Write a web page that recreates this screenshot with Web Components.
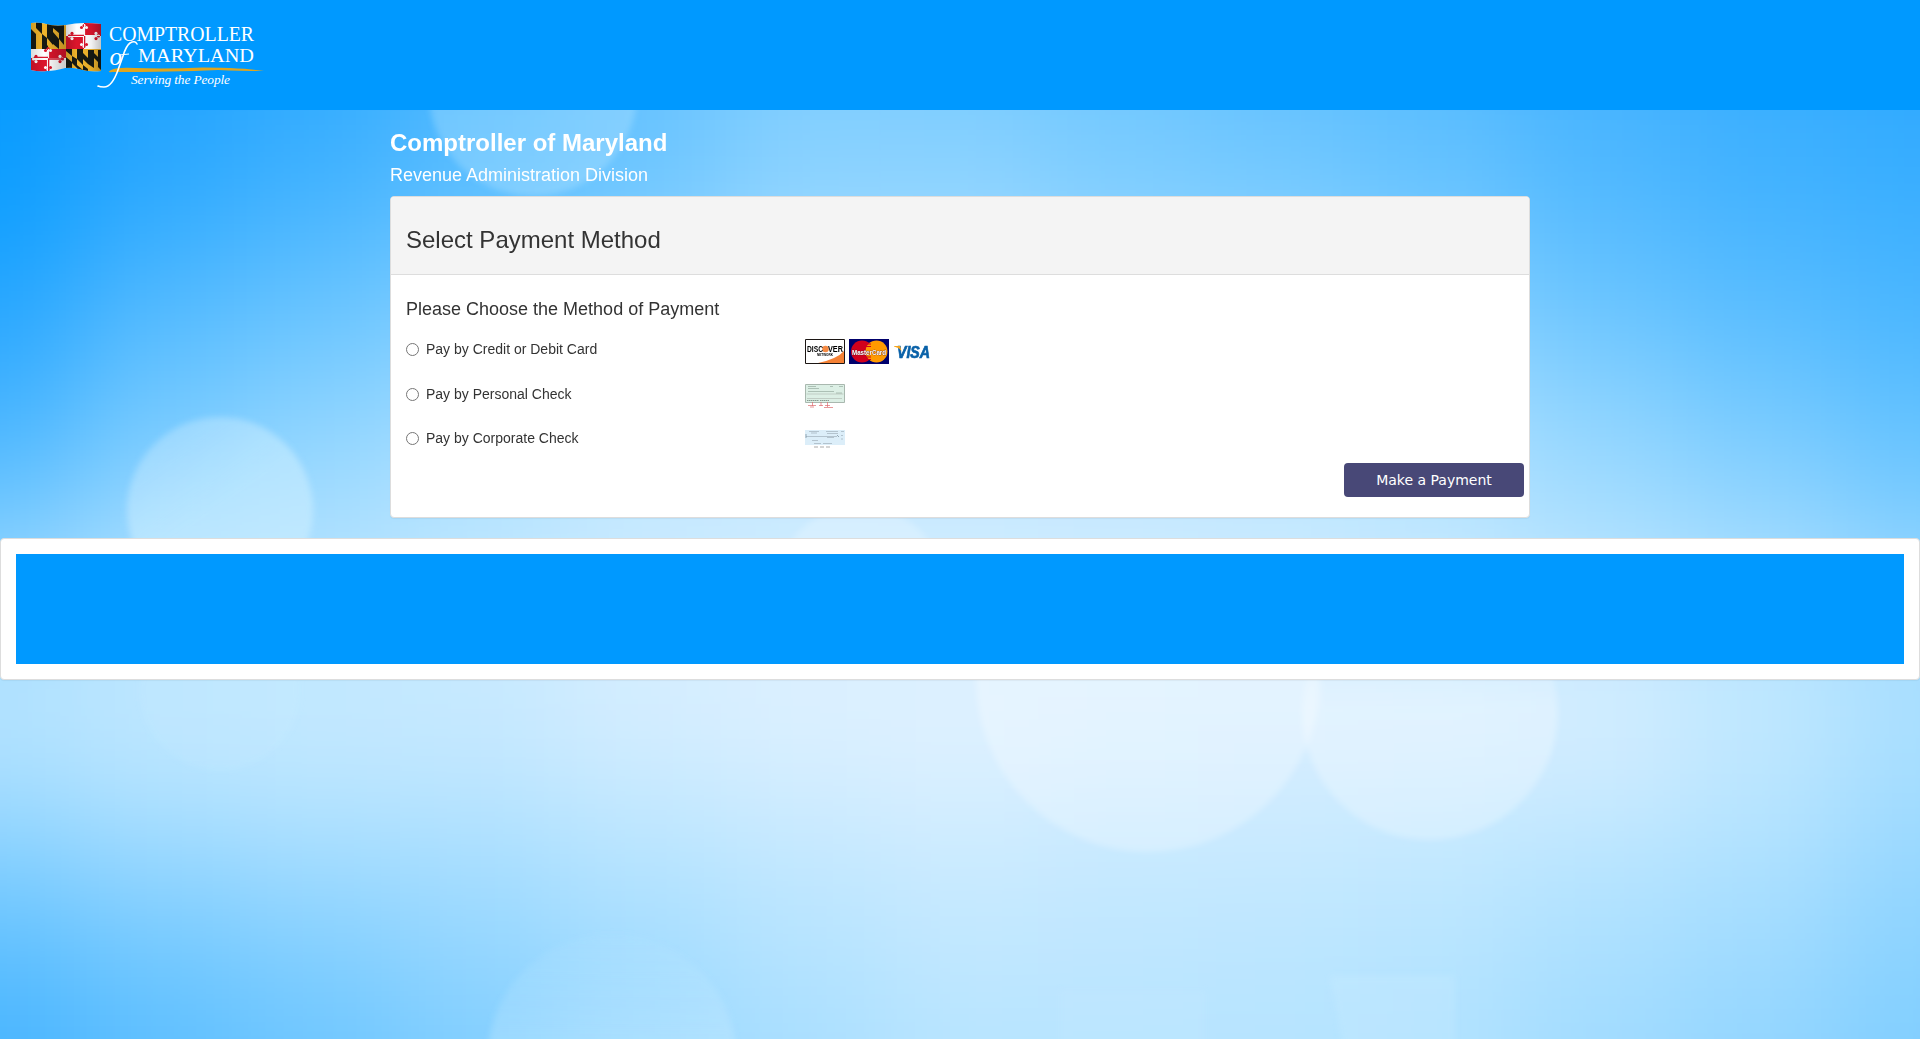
<!DOCTYPE html>
<html lang="en">
<head>
<meta charset="utf-8">
<title>Select Payment Method</title>
<style>
html,body{margin:0;height:100%;overflow:hidden}
body{font:14px/20px "Liberation Sans",Arial,sans-serif;color:#333}
</style>
</head>
<body>
<payment-page></payment-page>
<script>
const define = (name, html, connected) => customElements.define(name, class extends HTMLElement {
  constructor() {
    super();
    this.attachShadow({mode: 'open'}).innerHTML = html;
  }
  connectedCallback() {
    if (connected) connected(this.shadowRoot, this);
  }
});

/* Soft sky: a coarse grid of tones, smoothed, with pale discs over it. */
define('sky-backdrop', `
<style>:host{display:block;position:absolute;inset:0;z-index:-1;overflow:hidden}svg{display:block}</style>
<svg width="1920" height="1039" viewBox="0 0 1920 1039">
  <defs>
    <filter id="soft" filterUnits="userSpaceOnUse" x="-300" y="-200" width="2520" height="1440" color-interpolation-filters="sRGB"><feGaussianBlur stdDeviation="52"/></filter>
    <filter id="edge" x="-10%" y="-10%" width="120%" height="120%"><feGaussianBlur stdDeviation="3"/></filter>
    <linearGradient id="fade" x1="0" y1="0" x2=".7" y2="1"><stop offset="0" stop-color="#e4f5ff" stop-opacity=".25"/><stop offset=".55" stop-color="#d4f2ff" stop-opacity=".5"/></linearGradient>
    <linearGradient id="down" x1="0" y1="0" x2="0" y2="1"><stop offset=".15" stop-color="#fff" stop-opacity="0"/><stop offset=".5" stop-color="#fff" stop-opacity=".3"/><stop offset="1" stop-color="#fff" stop-opacity=".26"/></linearGradient>
    <linearGradient id="rise" x1="0" y1="0" x2="0" y2="1"><stop offset="0" stop-color="#d4f2ff" stop-opacity=".05"/><stop offset=".4" stop-color="#d4f2ff" stop-opacity=".26"/></linearGradient>
  </defs>
  <g id="tones" filter="url(#soft)"></g>
  <g filter="url(#edge)">
    <circle cx="533" cy="92" r="104" fill="#d4f2ff" opacity=".26"/>
    <circle cx="220" cy="510" r="93" fill="url(#fade)"/>
    <circle cx="1148" cy="680" r="172" fill="url(#down)"/>
    <circle cx="1430" cy="712" r="128" fill="url(#down)"/>
    <circle cx="612" cy="1058" r="124" fill="url(#rise)"/>
    <circle cx="220" cy="690" r="80" fill="#d9f2ff" opacity=".1"/>
    <circle cx="860" cy="592" r="86" fill="#fff" opacity=".22"/>
    <path d="M1330 976h125v80h-110z" fill="#d9f2ff" opacity=".16"/>
    <path d="M1060 990h145v60h-145z" fill="#d9f2ff" opacity=".12"/>
  </g>
</svg>`, root => {
  const stops = ['0099ff','22a4ff','44b3ff','62c1ff','80ceff','9edaff','b6e4ff','c9eaff','ddf0ff','ebf6ff']
    .map(h => [0, 2, 4].map(i => parseInt(h.substr(i, 2), 16)));
  const tone = v => {
    const i = Math.min(8, Math.floor(v)), f = v - i;
    return 'rgb(' + stops[i].map((c, k) => Math.round(c + (stops[i + 1][k] - c) * f)) + ')';
  };
  const ys = [110, 210, 310, 410, 510, 600, 690, 780, 870, 960, 1050];
  const rows = [
    [.2,1,1.5,2.4,3.1,4.0,3.9,3.5,3.1,2.7,2.1,1.7,1.4],
    [.5,1.5,2.2,3,3.6,4.6,4.7,4.2,3.9,3.4,2.6,2.1,1.8],
    [1.2,2.5,3.2,4,5,5.5,5.3,4.9,4.5,4.2,3.3,2.7,2.2],
    [2,3.5,4.3,5,6,6.5,6.3,6,5.8,5.4,4.4,3.6,2.9],
    [3.4,4.7,5.3,6,6.8,7,7,6.9,6.7,6.2,5.3,4.6,3.8],
    [5,6,6.2,6.7,7.2,7.5,7.5,7.4,7.3,7.1,6.5,5.8,5],
    [6,6.5,6.8,7,7.7,8.1,8.2,8,7.9,7.8,7.5,6.6,5.6],
    [5.4,6,6.3,6.4,7,7.5,7.8,7.5,7.4,7.3,7.2,6.3,5.3],
    [4,4.6,5,5.3,5.9,6.5,7,6.8,6.8,6.6,6,5.6,4.7],
    [2.8,3.5,4,4.6,5.2,5.9,6.5,6.4,6.2,6,5.5,5,4.3],
    [2.1,2.8,3.4,4,4.8,5.4,6,6,6,5.8,5.1,4.6,4]
  ];
  let out = '';
  rows.forEach((r, j) => {
    const top = j ? (ys[j - 1] + ys[j]) / 2 : -200;
    const bottom = j < 10 ? (ys[j] + ys[j + 1]) / 2 : 1250;
    r.forEach((v, i) => {
      const left = i ? i * 160 - 80 : -300, right = i < 12 ? i * 160 + 80 : 2220;
      out += `<rect x="${left}" y="${top}" width="${right - left + 1}" height="${bottom - top + 1}" fill="${tone(v)}"/>`;
    });
  });
  root.getElementById('tones').innerHTML = out;
});

define('state-logo', `
<style>:host{display:block;width:250px;height:80px}svg{display:block}text{font-family:"Liberation Serif",serif;fill:#fff}</style>
<svg width="250" height="80" viewBox="20 15 250 80">
  <defs>
    <clipPath id="flag"><path d="M31 23q7-1 15 1 10 3 20 1 9-2 18-2 8 0 17 1v47q-10 1-18-1-9-3-18-2-10 3-18 3-8 1-16-1z"/></clipPath>
    <clipPath id="tl"><path d="M31 22h35v27H31z"/></clipPath>
    <clipPath id="br"><path d="M66 49h36v25H66z"/></clipPath>
    <linearGradient id="shade"><stop offset="0" stop-opacity=".15"/><stop offset=".2" stop-opacity="0"/><stop offset=".48" stop-opacity=".2"/><stop offset=".65" stop-opacity="0"/><stop offset=".85" stop-opacity=".05"/><stop offset="1" stop-opacity=".25"/></linearGradient>
    <clipPath id="redTR"><path d="M84 22h18v14H84zM66 36h18v13H66z"/></clipPath>
    <clipPath id="redBL"><path d="M48 49h18v9H48zM31 58h17v16H31z"/></clipPath>
    <g id="cross"><path d="M-12 0H12M0-9V9" stroke-width="1.700"/><circle cx="-14.500" r="1.600"/><circle cx="-12" cy="-2.600" r="1.600"/><circle cx="-12" cy="2.600" r="1.600"/><circle cx="14.500" r="1.600"/><circle cx="12" cy="-2.600" r="1.600"/><circle cx="12" cy="2.600" r="1.600"/><circle cy="-10.500" r="1.500"/><circle cx="-2.500" cy="-8.500" r="1.500"/><circle cx="2.500" cy="-8.500" r="1.500"/><circle cy="10.500" r="1.500"/><circle cx="-2.500" cy="8.500" r="1.500"/><circle cx="2.500" cy="8.500" r="1.500"/></g>
  </defs>
  <g clip-path="url(#flag)">
    <path d="M30 20h72v56H30z" fill="#fff"/>
    <g clip-path="url(#tl)">
      <path d="M31 20h36v30H31z" fill="#f0b52c"/>
      <path d="M31 29l5 5v15h-5zM42 40l6 6v3h-6zM36 20h6v14l-6-6zM47 20h6v25l-5-6-1-1zM42 34l5 4v9l-5-6zM53 32l6 7v10l-6-5zM59 24h5v21l-5-6zM53 20h3l3 4v9l-6-5z" fill="#161a14"/>
    </g>
    <g clip-path="url(#br)">
      <path d="M65 48h38v27H65z" fill="#f0b52c"/>
      <path d="M66 49h6l0 7-6-5zM77 49h6v16l-6-6zM88 50h6v18l-6-4zM98 50h4v21l-4-4zM66 57l6 5v12h-6zM72 56l5 3v9l-5-5zM77 65l6 5v4h-6zM83 53l5 5v6l-5-5zM83 65l5 4v5h-5zM94 53l4 4v5l-4-4z" fill="#161a14"/>
    </g>
    <path d="M84 22h18v14H84zM66 36h18v13H66zM48 49h18v9H48zM31 58h17v16H31z" fill="#dc152c"/>
    <use href="#cross" x="84" y="36" fill="#dc152c"/>
    <path d="M68 35.500h16M84.500 36v10" stroke="#dc152c" stroke-width="1.600"/>
    <g clip-path="url(#redTR)"><use href="#cross" x="84" y="36" fill="#fff"/><path d="M84 24v22M68 36h32" stroke="#fff" stroke-width="2.200"/></g>
    <use href="#cross" x="48" y="59" fill="#dc152c"/>
    <path d="M34 57.500h14M48 59h14M48.500 59v12" stroke="#dc152c" stroke-width="1.600"/>
    <g clip-path="url(#redBL)"><use href="#cross" x="48" y="59" fill="#fff"/><path d="M48 48v24M34 59h28" stroke="#fff" stroke-width="2.200"/></g>
    <path d="M30 20h72v56H30z" fill="url(#shade)"/>
  </g>
  <text x="109" y="41" font-size="20" textLength="145" lengthAdjust="spacingAndGlyphs">COMPTROLLER</text>
  <text x="138" y="61.500" font-size="19.500" textLength="116" lengthAdjust="spacingAndGlyphs">MARYLAND</text>
  <path d="M111 70q6-3 24-2 32 1 68-.5 38 0 61 3.500-26 0-46-1-46 2-106 2-6 1-1-2z" fill="#dfa51f"/>
  <text x="109.500" y="64.500" font-size="25" font-style="italic">o</text>
  <path d="M137 44q-2-4-7-1-4 3-7 13l-5 14q-6 17-14 17-4 0-6-1" fill="none" stroke="#fff" stroke-width="1.600" stroke-linecap="round"/>
  <path d="M119 55l10-1" stroke="#fff" stroke-width="1.200"/>
  <text x="131" y="83.500" font-size="13.400" font-style="italic" textLength="99">Serving the People</text>
</svg>`);

define('site-header', `
<style>:host{display:block;height:110px;background:#09f;box-sizing:border-box;padding:15px 20px}</style><slot></slot>`);

define('agency-title', `
<style>:host{display:block;color:#fff;padding-top:20px}h1{font-size:24px;line-height:26px;margin:0 0 9px}h2{font-size:18px;line-height:20px;font-weight:400;margin:0}</style>
<h1><slot name="name"></slot></h1><h2><slot></slot></h2>`);

define('info-panel', `
<style>:host{display:block;box-sizing:border-box;border:1px solid #ddd;border-radius:4px;background:#fff;box-shadow:0 1px 1px rgba(0,0,0,.05);padding:15px}</style><slot></slot>`);

define('panel-heading', `
<style>:host{display:block;background:#f4f4f4;border-bottom:1px solid #ddd;border-radius:3px 3px 0 0;height:78px;box-sizing:border-box;padding:30px 15px 0;margin:-15px -15px 0;font-size:24px;line-height:26px}</style><slot></slot>`);

const art = {
  discover: `<path d="M.5.500h39v24H.5z" fill="#fff"/><path d="M13 24Q32 20 39 12v12z" fill="#f58135"/><path d="M.5.500h39v24H.5z" fill="none" stroke="#1c1614"/>
    <circle cx="20.500" cy="10" r="3.300" fill="#f58a43"/><text x="2" y="13" font-size="8.500" textLength="16" lengthAdjust="spacingAndGlyphs">DISC</text><text x="23" y="13" font-size="8.500" textLength="15" lengthAdjust="spacingAndGlyphs">VER</text><text x="12" y="16.500" font-size="3" textLength="16" lengthAdjust="spacingAndGlyphs">NETWORK</text>`,
  mastercard: `<path d="M0 0h40v25H0z" fill="#00006c"/><circle cx="13" cy="12.500" r="11" fill="#d1001c"/><circle cx="27.500" cy="12.500" r="11" fill="#ff9a00"/><path d="M17 5h5M17 7.500h5M17 18h5M18 20.500h4" stroke="#d1001c" stroke-width="1.200"/>
    <text x="3" y="15.500" font-size="7.500" fill="#fff" stroke="#5a1a20" stroke-width=".6" paint-order="stroke" textLength="34" lengthAdjust="spacingAndGlyphs">MasterCard</text>`,
  visa: `<text x="4" y="18.500" font-size="16" font-style="italic" fill="#0961a8" stroke="#0961a8" stroke-width=".7" textLength="33" lengthAdjust="spacingAndGlyphs">VISA</text><path d="M1 7h6l1.500 5Q5.500 8.500 1 7.500z" fill="#f5a51e"/>`,
  personal: `<path d="M.5.500h39v18H.5z" fill="#dcefe5" stroke="#a9b8af"/><path d="M1.500 10h37M2 14.500h35" stroke="#c0cdc5"/><path d="M3 2.500h8M3 4.500h11M34 2.500h4M25 2.500h3M3 7.500h26M31 9h6" stroke="#7d9084" stroke-width=".5"/><path d="M2 16.500h12M15 16.500h9" stroke="#62766a" stroke-dasharray="1.500 .5" stroke-width=".7"/>
    <path d="M7.500 18v4M16 18v4M22.500 18v5M3 21.500h8M5 23h4M14 21.500h4M20 21.500h5M19 23.500h9" stroke="#dc6b6f" stroke-width=".7"/>`,
  corporate: `<path d="M0 0h40v15H0z" fill="#dceef9"/><path d="M4 1.500h10M6 3h6M21 1.500h12M22 3.500h11M36 1.500h3M1 6.500h31M7 10.500h6M22 7.500h7M36 5.500h2M36 9h2M9 13.500h7M18 13.500h9" stroke="#91a0ab" stroke-width=".55"/><path d="M1 4v4M32 5l2 2" stroke="#738896" stroke-width=".7"/><path d="M9 17h4M15 17h4M21 17h4" stroke="#aaa" stroke-width="1"/>`
};
define('card-brand', `<style>:host{display:block;width:40px;height:25px}svg{display:block;overflow:visible}text{font-family:"Liberation Sans",sans-serif;font-weight:700}</style><div></div>`,
  (root, host) => {
    root.querySelector('div').innerHTML = `<svg width="40" height="25" viewBox="0 0 40 25">${art[host.getAttribute('kind')]}</svg>`;
  });

define('payment-option', `
<style>:host{display:flex;height:var(--row,44px)}label{display:flex;width:399px;align-items:flex-start}
input{margin:4px 7px 0 0;width:13px;height:13px;flex:none}.brands{display:flex;gap:4px}</style>
<label><input type="radio"><slot></slot></label><div class="brands"><slot name="brand"></slot></div>`);

define('action-button', `
<style>:host{display:flex;justify-content:flex-end;margin-right:-10px}
button{width:180px;height:34px;border:0;border-radius:4px;background:#484877;color:#fff;font:14px "DejaVu Sans",Verdana,sans-serif;padding:0}</style>
<button><slot></slot></button>`);

define('payment-page', `
<style>
:host{display:flex;flex-direction:column;position:relative;height:1039px;z-index:0}
.wrap{width:1140px;margin:0 auto}
.pay{height:322px;margin-top:11px}
h3{font-size:18px;line-height:20px;font-weight:400;margin:24px 0 20px}
payment-option:nth-of-type(1){--row:45px}
payment-option:nth-of-type(3){--row:35px}
payment-option:nth-of-type(3) card-brand{margin-top:2px}
.foot{margin-top:20px;height:142px}
.bar{height:110px;background:#09f}
</style>
<sky-backdrop></sky-backdrop>
<site-header><state-logo></state-logo></site-header>
<div class="wrap">
  <agency-title><span slot="name">Comptroller of Maryland</span>Revenue Administration Division</agency-title>
  <info-panel class="pay">
    <panel-heading>Select Payment Method</panel-heading>
    <h3>Please Choose the Method of Payment</h3>
    <payment-option>Pay by Credit or Debit Card<card-brand slot="brand" kind="discover"></card-brand><card-brand slot="brand" kind="mastercard"></card-brand><card-brand slot="brand" kind="visa"></card-brand></payment-option>
    <payment-option>Pay by Personal Check<card-brand slot="brand" kind="personal"></card-brand></payment-option>
    <payment-option>Pay by Corporate Check<card-brand slot="brand" kind="corporate"></card-brand></payment-option>
    <action-button>Make a Payment</action-button>
  </info-panel>
</div>
<info-panel class="foot"><div class="bar"></div></info-panel>`);
</script>
</body>
</html>
